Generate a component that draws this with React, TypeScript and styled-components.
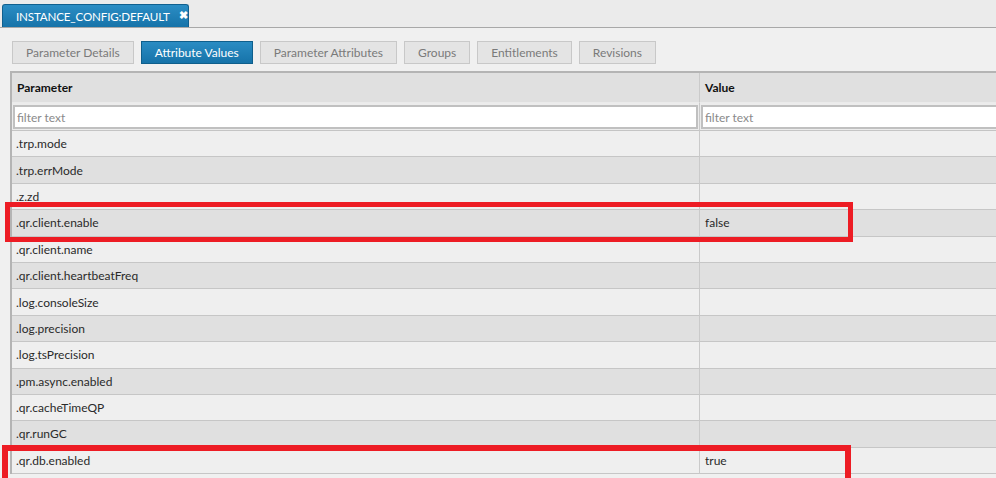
import { Fragment } from "react";
import styled, { createGlobalStyle } from "styled-components";

const GlobalStyle = createGlobalStyle`
  html, body {
    margin: 0;
    padding: 0;
    background: #f0f0f0;
    font-family: "Lato", "Open Sans", sans-serif;
    font-size: 12px;
    color: #333;
  }
  #root {
    width: 996px;
    height: 478px;
    overflow: hidden;
  }
`;

const Page = styled.div`
  position: relative;
  width: 996px;
  height: 478px;
  overflow: hidden;
`;

const TabBar = styled.div`
  display: flex;
  align-items: flex-end;
  height: 28px;
  box-sizing: border-box;
  padding: 4px 0 0 2px;
  background: #ebebeb;
  border-bottom: 1px solid #a8a8a8;
`;

const Tab = styled.div`
  display: flex;
  align-items: center;
  gap: 9px;
  width: 187px;
  height: 23px;
  box-sizing: border-box;
  padding: 0 0 0 13px;
  background: linear-gradient(#2b8dc4, #1673a9);
  border: 1px solid #10608f;
  border-bottom: none;
  border-radius: 3px 3px 0 0;
  color: #fff;
  font-size: 11.6px;
  letter-spacing: -0.15px;
  white-space: nowrap;
`;

const Close = styled.span`
  font-size: 11px;
  font-weight: bold;
  line-height: 1;
  margin-top: -4px;
`;

const ButtonRow = styled.div`
  display: flex;
  gap: 7px;
  padding: 13px 0 0 12px;
`;

const TabButton = styled.div<{ $active?: boolean }>`
  height: 23px;
  box-sizing: border-box;
  display: flex;
  align-items: center;
  padding: 0 13px;
  border: 1px solid ${(p) => (p.$active ? "#0f5f8c" : "#c8c8c8")};
  background: ${(p) =>
    p.$active ? "linear-gradient(#2a8cc3, #1673a9)" : "#e4e4e4"};
  color: ${(p) => (p.$active ? "#fff" : "#7a7a7a")};
  font-size: 12px;
  white-space: nowrap;
`;

const Table = styled.div`
  margin: 7px 0 0 10px;
  width: 1100px;
  border-top: 2px solid #b4b4b4;
  border-left: 2px solid #b4b4b4;
  display: grid;
  grid-template-columns: 688px 1fr;
`;

const HeadCell = styled.div<{ $first?: boolean }>`
  height: 30px;
  box-sizing: border-box;
  display: flex;
  align-items: center;
  padding-left: 5px;
  background: #e0e0e0;
  font-weight: bold;
  color: #111;
  border-right: ${(p) => (p.$first ? "1px solid #cacaca" : "none")};
  border-bottom: 1px solid #ebebeb;
`;

const FilterCell = styled.div<{ $first?: boolean }>`
  height: 28px;
  box-sizing: border-box;
  padding: 2px 1px 1px 1px;
  background: #ececec;
  border-right: ${(p) => (p.$first ? "1px solid #cacaca" : "none")};
  border-bottom: 1px solid #c4c4c4;
`;

const FilterInput = styled.input`
  width: 100%;
  height: 24px;
  box-sizing: border-box;
  border: 2px solid #c0c0c0;
  background: #fff;
  padding: 0 2px;
  font-family: "Lato", "Open Sans", sans-serif;
  font-size: 12px;
  color: #333;
  outline: none;
  &::placeholder {
    color: #8a8a8a;
  }
`;

const Cell = styled.div<{ $dark: boolean; $first?: boolean }>`
  height: 26.4px;
  box-sizing: border-box;
  display: flex;
  align-items: center;
  padding-left: ${(p) => (p.$first ? 4 : 5)}px;
  background: ${(p) => (p.$dark ? "#e0e0e0" : "#efefef")};
  border-right: ${(p) => (p.$first ? "1px solid #cacaca" : "none")};
  border-bottom: 1px solid #c6c6c6;
  color: #2a2a2a;
`;

const Highlight = styled.div<{
  $left: number;
  $top: number;
  $width: number;
  $height: number;
  $thick: number;
}>`
  position: absolute;
  left: ${(p) => p.$left}px;
  top: ${(p) => p.$top}px;
  width: ${(p) => p.$width}px;
  height: ${(p) => p.$height}px;
  box-sizing: border-box;
  border: ${(p) => p.$thick}px solid #ed1c24;
  pointer-events: none;
`;

const buttons = [
  "Parameter Details",
  "Attribute Values",
  "Parameter Attributes",
  "Groups",
  "Entitlements",
  "Revisions",
];

const rows: [string, string][] = [
  [".trp.mode", ""],
  [".trp.errMode", ""],
  [".z.zd", ""],
  [".qr.client.enable", "false"],
  [".qr.client.name", ""],
  [".qr.client.heartbeatFreq", ""],
  [".log.consoleSize", ""],
  [".log.precision", ""],
  [".log.tsPrecision", ""],
  [".pm.async.enabled", ""],
  [".qr.cacheTimeQP", ""],
  [".qr.runGC", ""],
  [".qr.db.enabled", "true"],
];

export default function App() {
  return (
    <Page>
      <GlobalStyle />
      <TabBar>
        <Tab>
          <span>INSTANCE_CONFIG:DEFAULT</span>
          <Close>✖</Close>
        </Tab>
      </TabBar>
      <ButtonRow>
        {buttons.map((b) => (
          <TabButton key={b} $active={b === "Attribute Values"}>
            {b}
          </TabButton>
        ))}
      </ButtonRow>
      <Table>
        <HeadCell $first>Parameter</HeadCell>
        <HeadCell>Value</HeadCell>
        <FilterCell $first>
          <FilterInput placeholder="filter text" />
        </FilterCell>
        <FilterCell>
          <FilterInput placeholder="filter text" />
        </FilterCell>
        {rows.map(([name, value], i) => (
          <Fragment key={name}>
            <Cell $dark={i % 2 === 1} $first>
              {name}
            </Cell>
            <Cell $dark={i % 2 === 1}>{value}</Cell>
          </Fragment>
        ))}
      </Table>
      <Highlight $left={5} $top={202} $width={848} $height={40} $thick={5} />
      <Highlight $left={2} $top={445} $width={849} $height={42} $thick={6} />
    </Page>
  );
}
